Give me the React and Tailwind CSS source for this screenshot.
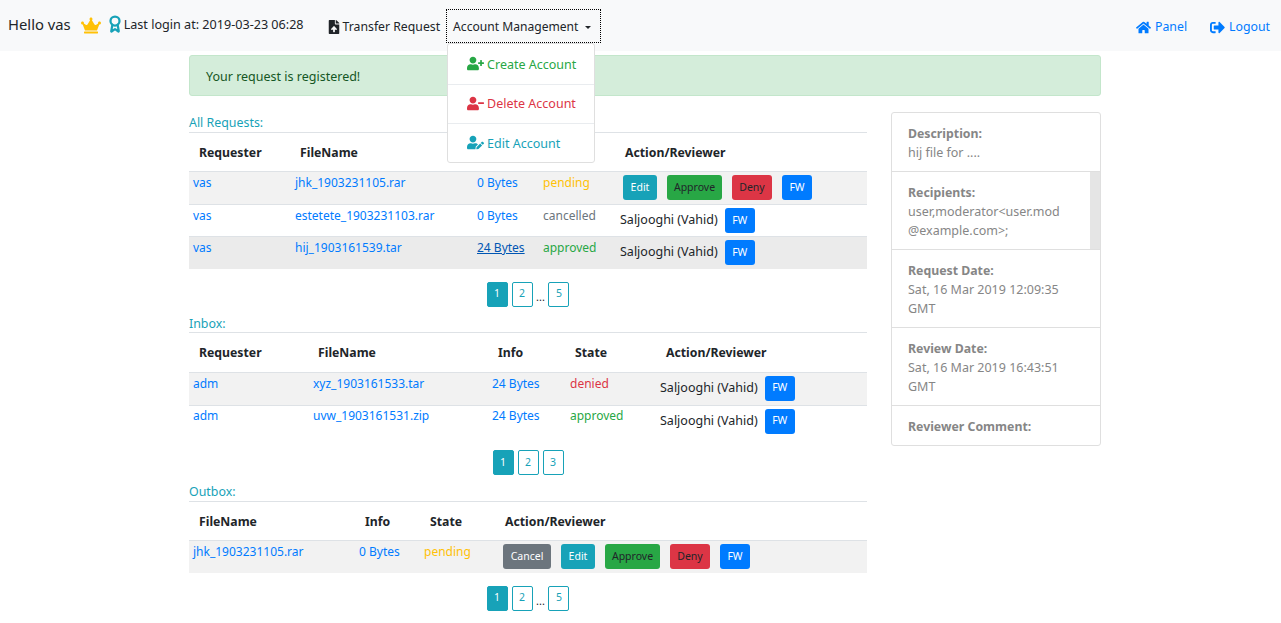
import { Award } from "lucide-react";
import { FaCrown, FaFileUpload, FaHome, FaSignOutAlt, FaUserEdit, FaUserMinus, FaUserPlus } from "react-icons/fa";

const FONT = "font-['Noto_Sans','Open_Sans',sans-serif]";

const BTN = {
  Cancel: "w-[48px] bg-[#6c757d] text-white",
  Edit: "w-[34px] bg-[#17a2b8] text-white",
  Approve: "w-[55px] bg-[#28a745] text-[#212529]",
  Deny: "w-[40px] bg-[#dc3545] text-[#212529]",
  FW: "w-[30px] bg-[#007bff] text-white",
};

const STATE = {
  pending: "text-[#ffc107]",
  cancelled: "text-[#6c757d]",
  approved: "text-[#28a745]",
  denied: "text-[#dc3545]",
};

const TABLES = [
  {
    title: "All Requests:",
    spacing: "",
    titlePad: "",
    head: ["Requester", "FileName", "", "", "Action/Reviewer"],
    headPads: ["pl-[10px]", "pl-[9px]", "pl-[10px]", "pl-[10px]", "pl-[9px]"],
    headHeight: "h-[39px]",
    cols: ["w-[102px]", "w-[182px]", "w-[66px]", "w-[77px]", ""],
    actionPad: "pl-[3px]",
    rows: [
      { cells: ["vas", "jhk_1903231105.rar", "0 Bytes"], state: "pending", actions: ["Edit", "Approve", "Deny", "FW"], bg: "bg-[#f2f2f2]", h: "h-[33px]", textPad: "pt-[2px]" },
      { cells: ["vas", "estetete_1903231103.rar", "0 Bytes"], state: "cancelled", reviewer: true, h: "h-[32px]", textPad: "pt-[2px]" },
      { cells: ["vas", "hij_1903161539.tar", "24 Bytes"], state: "approved", reviewer: true, bg: "bg-[#ebebeb]", h: "h-[32px]", textPad: "pt-[2px]", hovered: true },
    ],
    pages: ["1", "2", "...", "5"],
  },
  {
    title: "Inbox:",
    spacing: "mt-[6px]",
    titlePad: "pt-[1px]",
    head: ["Requester", "FileName", "Info", "State", "Action/Reviewer"],
    headPads: ["pl-[10px]", "pl-[9px]", "pl-[10px]", "pl-[9px]", "pl-[10px]"],
    headHeight: "h-[40px]",
    cols: ["w-[120px]", "w-[179px]", "w-[78px]", "w-[90px]", ""],
    actionPad: "pl-[3px]",
    rows: [
      { cells: ["adm", "xyz_1903161533.tar", "24 Bytes"], state: "denied", reviewer: true, bg: "bg-[#f2f2f2]", h: "h-[33px]", textPad: "pt-[2px]" },
      { cells: ["adm", "uvw_1903161531.zip", "24 Bytes"], state: "approved", reviewer: true, h: "h-[32px]", textPad: "pt-[1px]" },
    ],
    pages: ["1", "2", "3"],
  },
  {
    title: "Outbox:",
    spacing: "mt-[7px]",
    titlePad: "",
    head: ["FileName", "Info", "State", "Action/Reviewer"],
    headPads: ["pl-[10px]", "pl-[10px]", "pl-[10px]", "pl-[10px]"],
    headHeight: "h-[39px]",
    cols: ["w-[166px]", "w-[65px]", "w-[75px]", ""],
    actionPad: "pl-[4px]",
    rows: [
      { cells: ["jhk_1903231105.rar", "0 Bytes"], state: "pending", actions: ["Cancel", "Edit", "Approve", "Deny", "FW"], bg: "bg-[#f2f2f2]", h: "h-[32px]", textPad: "pt-[2px]" },
    ],
    pages: ["1", "2", "...", "5"],
  },
];

const DETAILS = [
  { label: "Description:", lines: ["hij file for ...."], h: "h-[58px]" },
  { label: "Recipients:", lines: ["user,moderator<user.mod", "@example.com>;"], h: "h-[78px]", track: true },
  { label: "Request Date:", lines: ["Sat, 16 Mar 2019 12:09:35", "GMT"], h: "h-[78px]" },
  { label: "Review Date:", lines: ["Sat, 16 Mar 2019 16:43:51", "GMT"], h: "h-[78px]" },
  { label: "Reviewer Comment:", lines: [], h: "h-[40px]" },
];

const MENU = [
  { label: "Create Account", Icon: FaUserPlus, color: "text-[#28a745]", h: "h-[40px]", textPad: "pt-[3px]" },
  { label: "Delete Account", Icon: FaUserMinus, color: "text-[#dc3545]", h: "h-[39px]", textPad: "pt-[1px]" },
  { label: "Edit Account", Icon: FaUserEdit, color: "text-[#17a2b8]", h: "h-[39px]", textPad: "pt-[3px]" },
];

function ActionButton({ name }) {
  return (
    <button className={`flex h-[25px] items-center justify-center rounded-[3px] text-[10.5px] ${BTN[name]}`}>
      {name}
    </button>
  );
}

function Reviewer() {
  return (
    <div className="flex items-center gap-[7px]">
      <span className="text-[12.5px] text-[#212529]">Saljooghi (Vahid)</span>
      <ActionButton name="FW" />
    </div>
  );
}

function Pagination({ pages }) {
  return (
    <div className="flex h-[25px] items-center justify-center gap-[4px]">
      {pages.map((page, index) =>
        page === "..." ? (
          <span key={index} className="-mx-[0.5px] pt-[6px] text-[11px] text-[#212529]">...</span>
        ) : (
          <span
            key={index}
            className={`flex h-[25px] w-[21px] items-center justify-center rounded-[2px] border border-[#17a2b8] text-[10.5px] ${index === 0 ? "bg-[#17a2b8] text-white" : "text-[#17a2b8]"}`}
          >
            {page}
          </span>
        ),
      )}
    </div>
  );
}

function RequestTable({ table }) {
  return (
    <section className={table.spacing}>
      <div className={`h-[19px] text-[12.4px] leading-[19px] text-[#17a2b8] ${table.titlePad}`}>{table.title}</div>
      <table className="w-full table-fixed border-collapse border-t border-[#dee2e6]">
        <colgroup>
          {table.cols.map((col, index) => <col key={index} className={col} />)}
        </colgroup>
        <thead>
          <tr className={table.headHeight}>
            {table.head.map((label, index) => (
              <th key={index} className={`pt-[2px] text-left text-[12.25px] font-bold text-[#212529] ${table.headPads[index]}`}>{label}</th>
            ))}
          </tr>
        </thead>
        <tbody>
          {table.rows.map((row, rowIndex) => (
            <tr key={rowIndex} className={`border-t border-[#dee2e6] ${row.h} ${row.bg ?? ""}`}>
              {row.cells.map((cell, index) => (
                <td key={index} className={`pl-[4px] align-top text-[12px] leading-[18px] ${row.textPad}`}>
                  <a className={row.hovered && index === row.cells.length - 1 ? "text-[#0056b3] underline" : "text-[#007bff]"}>{cell}</a>
                </td>
              ))}
              <td className={`pl-[4px] align-top text-[12px] leading-[18px] ${row.textPad} ${STATE[row.state]}`}>{row.state}</td>
              <td className="pl-[4px] pt-[3px] align-top">
                {row.reviewer ? (
                  <Reviewer />
                ) : (
                  <div className={`flex gap-[10px] ${table.actionPad}`}>
                    {row.actions.map((name) => <ActionButton key={name} name={name} />)}
                  </div>
                )}
              </td>
            </tr>
          ))}
        </tbody>
      </table>
      <div className="mt-[13px]"><Pagination pages={table.pages} /></div>
    </section>
  );
}

function Details() {
  return (
    <aside className="w-[210px] overflow-hidden rounded-[3px] border border-[#dfdfdf] text-[12.5px] leading-[19px] text-[#868686]">
      {DETAILS.map((item, index) => (
        <div key={item.label} className={`relative pl-[16px] pt-[11px] ${item.h} ${index > 0 ? "border-t border-[#dfdfdf]" : ""}`}>
          <div className="text-[12.3px] font-bold">{item.label}</div>
          {item.lines.map((line) => <div key={line}>{line}</div>)}
          {item.track && <div className="absolute inset-y-0 right-0 w-[10px] bg-[#e5e5e5]" />}
        </div>
      ))}
    </aside>
  );
}

function AccountMenu() {
  return (
    <div className="absolute left-[1px] top-[34px] z-10 w-[148px] rounded-[3px] border border-[#dfdfdf] bg-white">
      {MENU.map(({ label, Icon, color, h, textPad }, index) => (
        <div key={label} className={`flex items-center gap-[3px] pl-[19px] text-[12.5px] ${color} ${h} ${index > 0 ? "border-t border-[#e9ecef]" : ""}`}>
          <Icon className="size-[17px]" />
          <span className={textPad}>{label}</span>
        </div>
      ))}
    </div>
  );
}

function Navbar() {
  return (
    <nav className="flex h-[51px] items-center bg-[#f8f9fa] text-[#212529]">
      <span className="ml-[8px] pb-[3px] text-[14.8px]">Hello vas</span>
      <FaCrown className="ml-[10px] size-[20px] pb-[1px] text-[#ffc107]" />
      <Award className="-mt-[3px] ml-[5px] size-[18px] text-[#17a2b8]" strokeWidth={3} />
      <span className="pb-[1px] text-[12.6px]">Last login at: 2019-03-23 06:28</span>
      <span className="ml-[23px] flex items-center gap-[2px] pt-[3px] text-[12.25px]">
        <FaFileUpload className="size-[14px]" />
        Transfer Request
      </span>
      <div className="relative ml-[6px]">
        <div className="flex h-[34px] w-[155px] items-center gap-[7px] border border-dotted border-black pl-[6px] pt-[3px] text-[12.1px]">
          Account Management
          <span className="mt-[1px] border-x-[3.5px] border-t-[3.5px] border-x-transparent border-t-[#212529]" />
        </div>
        <AccountMenu />
      </div>
      <div className="ml-auto mr-[11px] flex items-center gap-[23px] pt-[3px] text-[12.3px] text-[#007bff]">
        <span className="flex items-center gap-[4px]"><FaHome className="size-[15px]" />Panel</span>
        <span className="flex items-center gap-[4px]"><FaSignOutAlt className="size-[15px]" />Logout</span>
      </div>
    </nav>
  );
}

export default function App() {
  return (
    <div className={`min-h-[623px] bg-white ${FONT}`}>
      <Navbar />
      <main className="ml-[189px] w-[912px] pt-[4px]">
        <div className="flex h-[41px] items-center rounded-[3px] border border-[#c3e6cb] bg-[#d4edda] pl-[16px] pt-[3px] text-[12.5px] text-[#155724]">
          Your request is registered!
        </div>
        <div className="mt-[16px] flex items-start gap-[24px]">
          <div className="w-[678px] pt-[1px]">
            {TABLES.map((table) => <RequestTable key={table.title} table={table} />)}
          </div>
          <Details />
        </div>
      </main>
    </div>
  );
}
